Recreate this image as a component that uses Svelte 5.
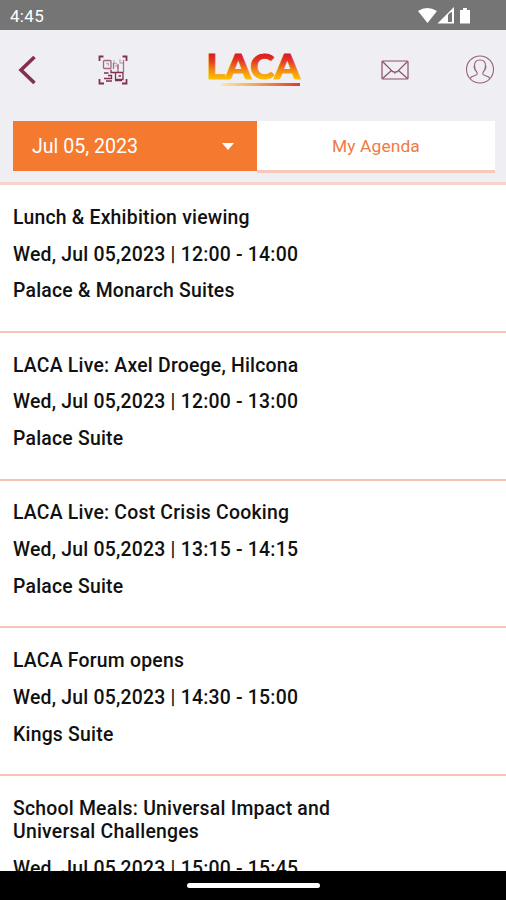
<script>
  const sessions = [
    { title: 'Lunch & Exhibition viewing', time: '12:00 - 14:00', room: 'Palace & Monarch Suites' },
    { title: 'LACA Live: Axel Droege, Hilcona', time: '12:00 - 13:00', room: 'Palace Suite' },
    { title: 'LACA Live: Cost Crisis Cooking', time: '13:15 - 14:15', room: 'Palace Suite' },
    { title: 'LACA Forum opens', time: '14:30 - 15:00', room: 'Kings Suite' },
    { title: 'School Meals: Universal Impact and Universal Challenges', time: '15:00 - 15:45', room: '' },
  ];
</script>

<div class="screen">
  <div class="status">
    <span>4:45</span>
    <svg width="58" height="18" viewBox="0 0 58 18" fill="#fff">
      <path d="M1 4Q10 -2 20 4L10.500 16Z" />
      <path fill-rule="evenodd" d="M20.500 16.500L37 0V16.500ZM31 8V15H35V5Q33 5 31 8Z" />
      <path d="M46 1h4v2h3v13.500h-10V3h3z" />
    </svg>
  </div>

  <header>
    <div class="tools">
      <svg class="back" width="20" height="30" viewBox="0 0 20 30" fill="none" stroke="#813052" stroke-width="3.6">
        <path d="M16.500 2L3 15L16.500 28" />
      </svg>
      <svg class="qr" width="30" height="30" viewBox="0 0 30 30" fill="none" stroke="#813052" stroke-width="1.3">
        <path stroke-width="1.8" d="M1.500 6V1.500H5.500M24.500 1.500H28.500V6M28.500 24V28.500H24M6 28.500H1.500V24" />
        <rect opacity=".7" x="5.500" y="5.500" width="7.500" height="8" rx="1" />
        <path opacity=".35" d="M8 8.500h2.500v2.500M16 5v3.500h3M17 11h3v3M22 4v4h3" />
        <path opacity=".65" d="M25.500 5v12M20 9v8M15.500 8v6" />
        <path d="M6 18h4.500M13 14.500v3h12v7h-7.500v-7M10 20.500h3.500v3H6M8 26h6M20.500 21h2.500M17 25.500h7" />
      </svg>
      <svg class="logo" width="96" height="38" viewBox="0 0 96 38">
        <defs>
          <linearGradient id="fire" gradientUnits="userSpaceOnUse" x1="0" y1="2" x2="0" y2="29">
            <stop offset="0" stop-color="#d91520" />
            <stop offset=".3" stop-color="#e23b20" />
            <stop offset=".65" stop-color="#f28b12" />
            <stop offset="1" stop-color="#fcc500" />
          </linearGradient>
          <linearGradient id="line" x1="0" x2="1">
            <stop offset="0" stop-color="#fbe8b0" />
            <stop offset=".45" stop-color="#f4a64e" />
            <stop offset="1" stop-color="#dc3b35" />
          </linearGradient>
        </defs>
        <text x="-.5" y="28" textLength="93.500" lengthAdjust="spacingAndGlyphs" fill="url(#fire)" stroke="url(#fire)" stroke-width="1">LACA</text>
        <rect x="14" y="32" width="79" height="3" fill="url(#line)" />
      </svg>
      <svg class="mail" width="28" height="22" viewBox="0 0 28 22" fill="none" stroke="#8d4e6b" stroke-width="1.2">
        <rect x="1" y="2" width="26" height="18" rx="1" />
        <path d="M1.500 2.500L12 13Q13 12 14 14Q15 12 16 13L26.500 2.500M1.500 19.500L10.500 11.500M26.500 19.500L17.500 11.500" />
      </svg>
      <svg class="user" width="30" height="30" viewBox="0 0 30 30" fill="none" stroke="#96647c" stroke-width="1.100">
        <circle cx="15" cy="14.500" r="13.500" />
        <path d="M5 23.500Q6 21.500 10 20.500Q13 19.500 12 17.500Q9.500 15 9.500 10.500Q9.500 5 15 5T20.500 10.500Q20.500 15 18 17.500Q17 19.500 20 20.500Q24 21.500 25 23.500M9.500 11q-1 0 .5 4M20.500 11q1 0 -.5 4" />
      </svg>
    </div>
    <div class="tabs">
      <div class="date"><span>Jul 05, 2023</span><i></i></div>
      <div class="agenda">My Agenda</div>
    </div>
  </header>

  <main>
    {#each sessions as session}
      <article>
        <h2>{session.title}</h2>
        <p>Wed, Jul 05,2023 | {session.time}</p>
        <p>{session.room}</p>
      </article>
    {/each}
  </main>

  <footer><div></div></footer>
</div>

<style>
  .screen {
    width: 506px;
    height: 900px;
    display: flex;
    flex-direction: column;
    overflow: hidden;
    background: #fff;
    font-family: Roboto, sans-serif;
  }
  .status {
    height: 30px;
    flex: none;
    box-sizing: border-box;
    padding: 1px 31px 0 10px;
    display: flex;
    align-items: center;
    justify-content: space-between;
    background: #757575;
    color: #fff;
    font-size: 17px;
    letter-spacing: 0.3px;
  }
  header {
    height: 155px;
    flex: none;
    box-sizing: border-box;
    background: #efeef3;
    border-bottom: 3px solid #f8d2cb;
  }
  .tools {
    height: 91px;
    box-sizing: border-box;
    padding: 0 11px 12px 18px;
    display: flex;
    align-items: center;
  }
  .qr { margin-left: 60px; }
  .logo {
    margin-left: 79px;
    overflow: visible;
  }
  .logo text {
    font: 900 35px Lato, sans-serif;
  }
  .mail { margin-left: 78px; }
  .user { margin-left: auto; }
  .tabs {
    display: flex;
    padding: 0 11px 0 13px;
    align-items: flex-start;
  }
  .date {
    width: 244px;
    height: 50px;
    box-sizing: border-box;
    padding: 1px 23px 0 19px;
    display: flex;
    align-items: center;
    justify-content: space-between;
    background: #f47a30;
    color: #fff;
    font-size: 19.6px;
  }
  .date i {
    border: 6.5px solid transparent;
    border-top: 7px solid #fff;
    border-bottom: 0;
  }
  .agenda {
    flex: 1;
    height: 49px;
    line-height: 51px;
    background: #fff;
    border-bottom: 3px solid #f6c8bd;
    color: #f07a45;
    font-size: 17.4px;
    letter-spacing: 0.1px;
    text-align: center;
  }
  main {
    flex: 1;
    min-height: 0;
    overflow: hidden;
  }
  article {
    height: 147.8px;
    box-sizing: border-box;
    padding: 20.800px 150px 0 13px;
    border-bottom: 2.500px solid #f5c3b7;
    color: #111;
  }
  article:last-child { height: auto; }
  h2, p {
    margin: 0 0 13.300px;
    font-size: 19.400px;
    font-weight: 500;
    line-height: 23.400px;
    letter-spacing: 0.22px;
  }
  p { white-space: nowrap; }
  footer {
    height: 29px;
    flex: none;
    background: #000;
    display: flex;
    justify-content: center;
    align-items: center;
  }
  footer div {
    width: 133px;
    height: 5px;
    border-radius: 3px;
    background: #fff;
  }
</style>
